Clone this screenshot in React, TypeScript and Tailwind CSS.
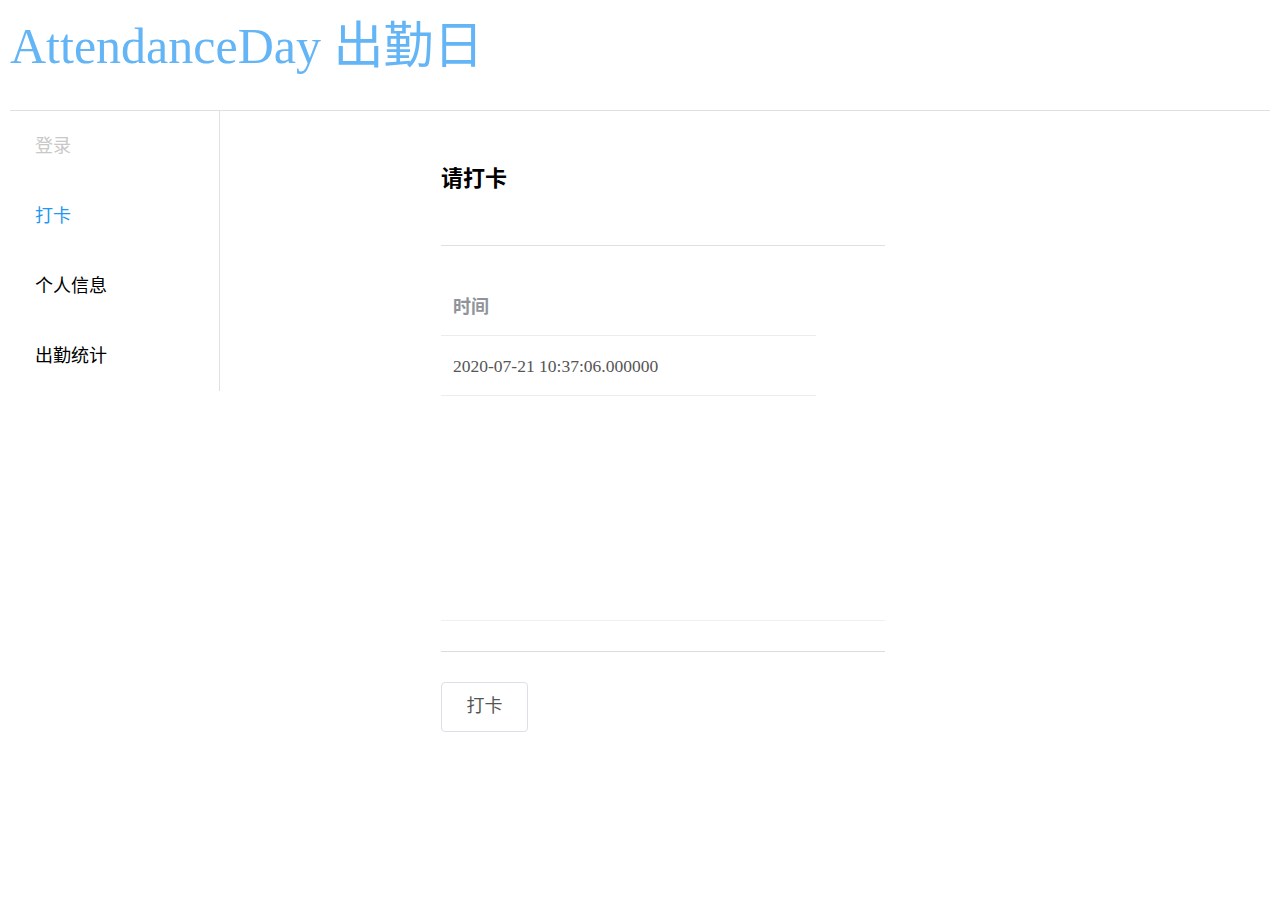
const menu = [
  { label: "登录", color: "text-[#c8c8c8]" },
  { label: "打卡", color: "text-[#2196f3]" },
  { label: "个人信息", color: "text-black" },
  { label: "出勤统计", color: "text-black" },
];

export default function App() {
  return (
    <div className="min-h-[904px] bg-white px-[10px] font-['Liberation_Sans','Noto_Sans_CJK_SC',sans-serif]">
      <header className="h-[111px] border-b border-[#e0e0e0]">
        <h1 className="pt-[14px] text-[50px] leading-[64px] text-[#64b5f6] font-['Liberation_Serif','Noto_Sans_CJK_SC',serif]">
          AttendanceDay 出勤日
        </h1>
      </header>

      <div className="flex">
        <nav className="w-[210px] h-[280px] border-r border-[#e0e0e0] flex flex-col">
          {menu.map((m) => (
            <div key={m.label} className={`h-[70px] flex items-center pl-[25px] text-[18px] ${m.color}`}>
              {m.label}
            </div>
          ))}
        </nav>

        <main className="ml-[221px] w-[444px] pt-[52px]">
          <h2 className="text-[22px] font-bold leading-[32px] text-black">请打卡</h2>
          <div className="mt-[50px] border-t border-[#e0e0e0]" />

          <table className="mt-[29px] w-[375px] border-collapse">
            <thead>
              <tr className="border-b border-[#ececec]">
                <th className="h-[60px] px-[12px] pt-[6px] text-left text-[18px] font-bold text-[#909399]">时间</th>
              </tr>
            </thead>
            <tbody>
              <tr className="border-b border-[#ececec]">
                <td className="h-[60px] px-[12px] pt-[2px] text-[17.5px] text-[#555] font-['Liberation_Serif',serif]">
                  2020-07-21 10:37:06.000000
                </td>
              </tr>
            </tbody>
          </table>

          <div className="mt-[224px] border-t border-[#efefef]" />
          <div className="mt-[30px] border-t border-[#dcdcdc]" />

          <button className="mt-[30px] w-[87px] h-[50px] rounded-[4px] border border-[#dcdfe6] bg-white text-[18px] text-[#555]">
            打卡
          </button>
        </main>
      </div>
    </div>
  );
}
